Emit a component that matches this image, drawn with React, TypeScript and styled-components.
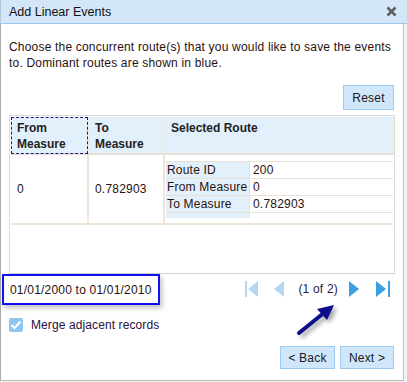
import React from "react";
import styled, { createGlobalStyle } from "styled-components";

const GlobalStyle = createGlobalStyle`
  html, body {
    margin: 0;
    padding: 0;
    background: #ffffff;
  }
  body {
    font-family: "Liberation Sans", Arial, sans-serif;
    font-size: 12px;
  }
`;

const Dialog = styled.div`
  position: relative;
  width: 407px;
  height: 382px;
  overflow: hidden;
  background: #f2f2f2;
  display: flex;
  flex-direction: column;
`;

const TitleBar = styled.div`
  height: 23px;
  flex: none;
  display: flex;
  align-items: center;
  justify-content: space-between;
  padding: 0 10px 0 8px;
  background: #d4e7f8;
  border-bottom: 1px solid #9cc6ec;
  border-left: 1px solid #b4c8da;
  font-size: 12.5px;
  color: #111;
`;

const CloseButton = styled.div`
  width: 11px;
  height: 11px;
  display: flex;
`;

const Body = styled.div`
  flex: none;
  height: 356px;
  width: 402px;
  background: #ffffff;
  border-left: 1px solid #acacac;
  border-right: 1px solid #a3c9ec;
  border-bottom: 1px solid #b8b8b8;
  display: flex;
  flex-direction: column;
`;

const Description = styled.p`
  margin: 15px 0 0;
  padding: 0 8px;
  font-size: 12px;
  line-height: 16px;
  letter-spacing: 0.19px;
  white-space: nowrap;
  color: #2a1010;
`;

const ResetRow = styled.div`
  display: flex;
  justify-content: flex-end;
  padding-right: 9px;
  margin-top: 14px;
`;

const Button = styled.button<{ $w: number; $h: number }>`
  width: ${(p) => p.$w}px;
  height: ${(p) => p.$h}px;
  padding: 0;
  white-space: nowrap;
  background: #d0e6fa;
  border: 1px solid #9dcaf0;
  border-radius: 0;
  font-family: "Liberation Sans", Arial, sans-serif;
  font-size: 12px;
  letter-spacing: 0.2px;
  color: #1a1a1a;
  cursor: pointer;
`;

const GridFrame = styled.div`
  margin: 5px 8px 0 8px;
  height: 156px;
  border: 1px solid #dadada;
  border-bottom-color: #d0d0d0;
  padding: 1px 1px 0 1px;
`;

const RouteTable = styled.table`
  width: 383px;
  border-collapse: collapse;
  table-layout: fixed;
  font-size: 12px;
  color: #2a1010;
  border-bottom: 2px solid #eee5d6;
`;

const HeadCell = styled.th<{ $focused?: boolean }>`
  height: 37px;
  box-sizing: border-box;
  background: #e2f0fb;
  text-align: left;
  vertical-align: top;
  font-weight: bold;
  line-height: 16px;
  padding: 3px 6px 0 6px;
  border-right: 2px solid #f1ece3;
  border-bottom: 2px solid #e9e1d3;
  outline: ${(p) => (p.$focused ? "1px dashed #1a1a80" : "none")};
  outline-offset: -1px;
  color: #222;
`;

const DataCell = styled.td`
  height: 63px;
  padding: 0 6px;
  vertical-align: middle;
  letter-spacing: 0.2px;
  border-right: 2px solid #eee6d8;
`;

const NestedCell = styled.td`
  padding: 6px 0 5px 1px;
  vertical-align: top;
`;

const InfoTable = styled.table`
  width: 100%;
  border-collapse: collapse;
  table-layout: fixed;
  font-size: 12px;
  letter-spacing: 0.2px;
  color: #2a1010;
`;

const InfoLabel = styled.td<{ $h?: number }>`
  width: 82px;
  height: ${(p) => p.$h ?? 16}px;
  padding: 0 0 0 1px;
  background: #e2f0fb;
  white-space: nowrap;
  border-top: 1px solid #e9e1d3;
  border-right: 1px solid #e9e1d3;
  line-height: 16px;
`;

const InfoValue = styled.td`
  padding: 0 0 0 3px;
  border-top: 1px solid #e9e1d3;
  line-height: 16px;
`;

const FooterRow = styled.div`
  display: flex;
  align-items: center;
  justify-content: space-between;
  padding: 0 13px 0 1px;
`;

const DateBox = styled.div`
  width: 148px;
  height: 27px;
  display: flex;
  align-items: center;
  padding-left: 6px;
  border: 2px solid #1010f0;
  box-shadow: 2px 3px 5px rgba(0, 0, 0, 0.25);
  font-size: 12px;
  letter-spacing: 0.2px;
  color: #2a1010;
  white-space: nowrap;
`;

const Pager = styled.div`
  display: flex;
  align-items: center;
  margin-top: -1px;
`;

const PagerIcon = styled.span<{ $gap: number }>`
  display: flex;
  margin-right: ${(p) => p.$gap}px;
`;

const PageLabel = styled.span`
  font-size: 12px;
  letter-spacing: 0.2px;
  color: #2a1a40;
  margin-right: 11px;
`;

const CheckRow = styled.label`
  display: flex;
  align-items: center;
  gap: 8px;
  margin: 13px 0 0 8px;
  font-size: 12px;
  letter-spacing: 0.1px;
  color: #2a1040;
`;

const CheckBox = styled.span`
  width: 14px;
  height: 14px;
  border-radius: 2px;
  background: #8fc6ef;
  display: flex;
  align-items: center;
  justify-content: center;
`;

const ActionRow = styled.div`
  display: flex;
  justify-content: flex-end;
  gap: 5px;
  padding-right: 9px;
  margin-top: 14px;
`;

const Annotation = styled.svg`
  position: absolute;
  left: 290px;
  top: 298px;
  overflow: visible;
`;

const disabledBlue = "#b5d8f1";
const activeBlue = "#3c9fdf";

function FirstIcon() {
  return (
    <svg width="14" height="16" viewBox="0 0 14 16">
      <rect x="0" y="0" width="2" height="16" fill={disabledBlue} />
      <path d="M13 0 L13 16 L3 8 Z" fill={disabledBlue} />
    </svg>
  );
}

function PrevIcon() {
  return (
    <svg width="11" height="16" viewBox="0 0 11 16">
      <path d="M11 0 L11 16 L1 8 Z" fill={disabledBlue} />
    </svg>
  );
}

function NextIcon() {
  return (
    <svg width="11" height="16" viewBox="0 0 11 16">
      <path d="M0 0 L0 16 L10 8 Z" fill={activeBlue} />
    </svg>
  );
}

function LastIcon() {
  return (
    <svg width="14" height="16" viewBox="0 0 14 16">
      <path d="M0 0 L0 16 L10 8 Z" fill={activeBlue} />
      <rect x="12" y="0" width="2" height="16" fill={activeBlue} />
    </svg>
  );
}

export default function App() {
  return (
    <>
      <GlobalStyle />
      <Dialog>
        <TitleBar>
          <span>Add Linear Events</span>
          <CloseButton>
            <svg width="11" height="11" viewBox="0 0 11 11">
              <path d="M1.5 1.5 L9.5 9.5 M9.5 1.5 L1.5 9.5" stroke="#5f5f5f" strokeWidth="2.6" />
            </svg>
          </CloseButton>
        </TitleBar>
        <Body>
          <Description>
            Choose the concurrent route(s) that you would like to save the events
            <br />
            to. Dominant routes are shown in blue.
          </Description>
          <ResetRow>
            <Button $w={51} $h={25}>Reset</Button>
          </ResetRow>
          <GridFrame>
            <RouteTable>
              <colgroup>
                <col style={{ width: 77 }} />
                <col style={{ width: 76 }} />
                <col />
              </colgroup>
              <thead>
                <tr>
                  <HeadCell $focused>From<br />Measure</HeadCell>
                  <HeadCell>To<br />Measure</HeadCell>
                  <HeadCell>Selected Route</HeadCell>
                </tr>
              </thead>
              <tbody>
                <tr>
                  <DataCell>0</DataCell>
                  <DataCell>0.782903</DataCell>
                  <NestedCell>
                    <InfoTable>
                      <tbody>
                        <tr>
                          <InfoLabel>Route ID</InfoLabel>
                          <InfoValue>200</InfoValue>
                        </tr>
                        <tr>
                          <InfoLabel>From Measure</InfoLabel>
                          <InfoValue>0</InfoValue>
                        </tr>
                        <tr>
                          <InfoLabel>To Measure</InfoLabel>
                          <InfoValue>0.782903</InfoValue>
                        </tr>
                        <tr>
                          <InfoLabel $h={5} />
                          <InfoValue />
                        </tr>
                      </tbody>
                    </InfoTable>
                  </NestedCell>
                </tr>
              </tbody>
            </RouteTable>
          </GridFrame>
          <FooterRow>
            <DateBox>01/01/2000 to 01/01/2010</DateBox>
            <Pager>
              <PagerIcon $gap={14}><FirstIcon /></PagerIcon>
              <PagerIcon $gap={14}><PrevIcon /></PagerIcon>
              <PageLabel>(1 of 2)</PageLabel>
              <PagerIcon $gap={16}><NextIcon /></PagerIcon>
              <PagerIcon $gap={0}><LastIcon /></PagerIcon>
            </Pager>
          </FooterRow>
          <CheckRow>
            <CheckBox>
              <svg width="12" height="10" viewBox="0 0 12 10">
                <path d="M1.5 5 L4.5 8 L10.5 1.5" stroke="#ffffff" strokeWidth="2.2" fill="none" />
              </svg>
            </CheckBox>
            Merge adjacent records
          </CheckRow>
          <ActionRow>
            <Button $w={55} $h={23}>&lt; Back</Button>
            <Button $w={54} $h={23}>Next &gt;</Button>
          </ActionRow>
        </Body>
        <Annotation width="50" height="40" viewBox="0 0 50 40">
          <defs>
            <filter id="arrowShadow" x="-50%" y="-50%" width="200%" height="200%">
              <feDropShadow dx="3" dy="3" stdDeviation="2" floodColor="#000" floodOpacity="0.35" />
            </filter>
          </defs>
          <g filter="url(#arrowShadow)">
            <path d="M9 35 L35 14" stroke="#0c0c8c" strokeWidth="4" strokeLinecap="round" />
            <path d="M44 7 L27 11 L37 22 Z" fill="#0c0c8c" />
          </g>
        </Annotation>
      </Dialog>
    </>
  );
}
